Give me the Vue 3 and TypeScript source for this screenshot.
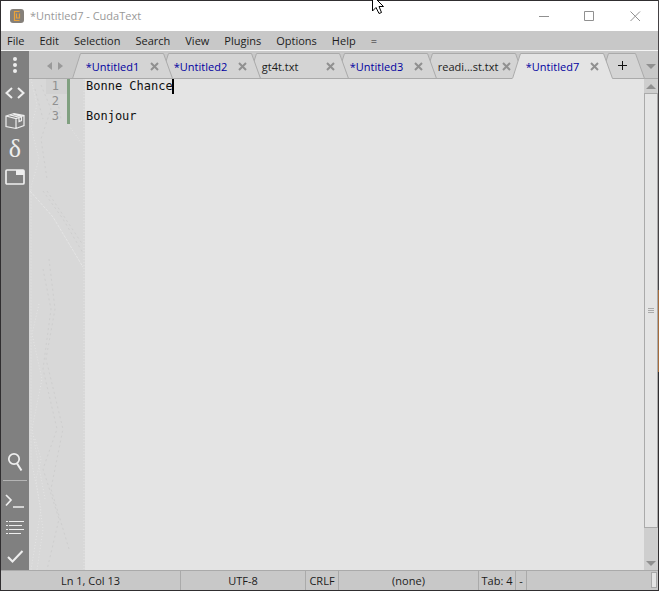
<script setup lang="ts">
import { ref, computed } from 'vue'

interface Tab { id: number; title: string; modified: boolean }

const menus = ['File', 'Edit', 'Selection', 'Search', 'View', 'Plugins', 'Options', 'Help', '=']
const tabs: Tab[] = [
  { id: 1, title: '*Untitled1', modified: true },
  { id: 2, title: '*Untitled2', modified: true },
  { id: 3, title: 'gt4t.txt', modified: false },
  { id: 4, title: '*Untitled3', modified: true },
  { id: 5, title: 'readi...st.txt', modified: false },
  { id: 6, title: '*Untitled7', modified: true },
]
const active = ref(6)
const code = ref('Bonne Chance\n\nBonjour')
const lineCount = computed(() => code.value.split('\n').length)
</script>

<template>
  <div class="window">
    <header class="titlebar">
      <svg class="logo" width="14" height="14" viewBox="0 0 14 14">
        <rect width="14" height="14" rx="3" fill="#85807a" />
        <path d="M9.5 2.5H4.5V11.5H9.5M6.5 4.5V9H9.5V4.5" fill="none" stroke="#e9a23b" stroke-width="1.2" />
      </svg>
      <h1>*Untitled7 - CudaText</h1>
      <div class="winbuttons">
        <button aria-label="Minimize"><svg width="11" height="11"><path d="M1 5.5H11" stroke="#909090" /></svg></button>
        <button aria-label="Maximize"><svg width="11" height="11"><path d="M.5.5H9.5V9.5H.5Z" fill="none" stroke="#909090" /></svg></button>
        <button aria-label="Close"><svg width="11" height="11"><path d="M.5.5L10 10M10 .5L.5 10" stroke="#909090" /></svg></button>
      </div>
      <svg class="pointer" width="12" height="19" viewBox="0 0 12 19">
        <path d="M.5 .5V16L4 12.5L7 18.5L9.5 17.5L7 11.5H11.5Z" fill="#fff" stroke="#000" />
      </svg>
    </header>

    <nav class="menubar">
      <button v-for="m in menus" :key="m">{{ m }}</button>
    </nav>

    <div class="workspace">
      <aside class="sidebar">
        <button aria-label="Menu"><svg width="20" height="20"><g class="dots"><circle cx="10" cy="4" r="2" /><circle cx="10" cy="10" r="2" /><circle cx="10" cy="16" r="2" /></g></svg></button>
        <button aria-label="Code tree"><svg width="20" height="20"><path d="M7 5L1.5 10L7 15M13 5L18.5 10L13 15" /></svg></button>
        <button aria-label="Project"><svg width="20" height="20"><path class="thin" d="M1 5L9 2.5L19 4.5V14.5L11 17.5L1 15.5ZM1 5L11 7.5L19 4.5M11 7.5V17.5M5 3.8L14 6.2V10.5L16.5 9.5V5.3L8 3" /></svg></button>
        <button class="delta" aria-label="Snippets">δ</button>
        <button aria-label="Tabs"><svg width="20" height="20"><path d="M2 3H18Q19 3 19 4V16Q19 17 18 17H2Q1 17 1 16V4Q1 3 2 3Z" class="medium" /><path d="M11 3H19V8H11Z" class="solid" /></svg></button>
        <span class="spacer"></span>
        <button aria-label="Find"><svg width="20" height="20"><circle cx="9" cy="8" r="5.2" class="medium" /><path d="M12 12.500L16.5 19.5" /></svg></button>
        <hr>
        <button aria-label="Console"><svg width="20" height="20"><path d="M1 5L6 10L1 15.5M8 17H19" class="medium" /></svg></button>
        <button aria-label="Output"><svg width="20" height="20"><path d="M1 3.5H3M4 3.5H19M1 7.5H3M4 7.5H17M1 11.5H3M4 11.5H19M1 15.5H3M4 15.5H16" class="thin" /></svg></button>
        <button aria-label="Validate"><svg width="20" height="20"><path d="M3 11L7.5 15.5L17.5 5" /></svg></button>
      </aside>

      <main>
        <div class="tabbar">
          <div class="arrows">
            <button aria-label="Previous tabs"><svg width="5" height="8"><path d="M5 0V8L0 4Z" /></svg></button>
            <button aria-label="Next tabs"><svg width="5" height="8"><path d="M0 0V8L5 4Z" /></svg></button>
          </div>
          <div
            v-for="t in tabs" :key="t.id" class="tab"
            :class="{ active: t.id === active, modified: t.modified }"
            :style="{ zIndex: t.id === active ? 20 : 10 - t.id }"
          >
            <svg class="shape" width="101" height="26" viewBox="0 0 101 26">
              <path d="M0 26V25.5L8.5 .5H91.5L100.5 25.5V26Z" class="face" />
              <path d="M.5 25.5L8.5 .5H91.5L100.5 25.5" class="edge" />
              <path v-if="t.id !== active" d="M0 25.5H101" class="edge" />
            </svg>
            <button class="name" @click="active = t.id">{{ t.title }}</button>
            <button class="close" :aria-label="'Close ' + t.title"><svg width="9" height="9"><path d="M1 1L8 8M8 1L1 8" /></svg></button>
          </div>
          <button class="add" aria-label="New tab">
            <svg width="45" height="26"><path d="M.5 25.5L8.5 .5H35.5L44.5 25.5Z" class="face edge" /><path d="M18 12.5H27M22.5 8V17" stroke="#111" /></svg>
          </button>
          <button class="list" aria-label="Tab list"><svg width="10" height="5"><path d="M0 0H10L5 5Z" /></svg></button>
        </div>

        <div class="editor">
          <div class="gutter">
            <svg class="grain" width="56" height="491" viewBox="0 0 56 491" fill="none">
              <g stroke="#e4e4e4" stroke-dasharray="1 2">
                <path d="M1 112L24 138L54 188" stroke-dasharray="3 1" />
                <path d="M2 0L8 26L2 48L10 80L2 108V380L12 430L2 491" />
                <path d="M10 225L3 255L13 300L3 350L16 420" />
                <path d="M6 360L12 380L7 400L14 450L8 491" />
                <path d="M55 0V491" />
                <path d="M38 44L54 66" />
              </g>
              <g stroke="#cecece" stroke-dasharray="2 3">
                <path d="M14 112L34 140L54 174M18 112L54 166" />
                <path d="M12 6L22 30L12 60L18 100M26 8L32 40M6 10L14 40" />
                <path d="M14 190L22 230L14 290L28 350L14 390L30 440L18 491" />
                <path d="M20 180L26 230L17 280L34 350L22 410L40 470" />
              </g>
            </svg>
            <ol><li v-for="n in lineCount" :key="n" :class="{ current: n === 1 }">{{ n }}</li></ol>
          </div>
          <div class="code">
            <textarea v-model="code" aria-label="Document text" spellcheck="false"></textarea>
            <span class="caret"></span>
          </div>
          <div class="scrollbar">
            <button aria-label="Scroll up"><svg width="10" height="5"><path d="M5 0L10 5H0Z" /></svg></button>
            <div class="thumb"><i></i><i></i><i></i></div>
            <div class="track"></div>
            <button aria-label="Scroll down"><svg width="10" height="5"><path d="M0 0H10L5 5Z" /></svg></button>
          </div>
        </div>
      </main>
    </div>

    <footer class="statusbar">
      <span class="pos">Ln 1, Col 13</span>
      <span class="enc">UTF-8</span>
      <span class="eol">CRLF</span>
      <span class="lexer">(none)</span>
      <span class="tabsize">Tab: 4</span>
      <span class="sel">-</span>
      <span class="rest"><i></i></span>
    </footer>
  </div>
</template>

<style>
body { margin: 0; }
</style>

<style scoped>
.window {
  box-sizing: border-box;
  height: 100vh;
  display: flex;
  flex-direction: column;
  padding: 1px;
  background: linear-gradient(#454245 49%, #a46b3c 49% 63%, #302e30 63%) right / 1px 100% no-repeat, #302e30;
  font: 11px/16px "Open Sans", "Noto Sans", sans-serif;
  color: #1c1c1c;
}
button {
  border: 0;
  padding: 0;
  margin: 0;
  background: none;
  font: inherit;
  color: inherit;
  display: flex;
  align-items: center;
  justify-content: center;
}
svg { display: block; }
.titlebar {
  position: relative;
  display: flex;
  align-items: center;
  height: 30px;
  flex: none;
  background: #fff;
  padding-left: 9px;
  gap: 6px;
}
h1 { margin: 0; flex: 1; font-size: 11px; font-weight: 400; color: #999; }
.winbuttons { display: flex; }
.winbuttons button { width: 46px; height: 28px; }
.pointer { position: absolute; left: 371px; top: -6px; }
.menubar {
  display: flex;
  gap: 15px;
  height: 19px;
  flex: none;
  padding-left: 6px;
  background: #c8c8c8;
  border-bottom: 1px solid #f4f4f4;
}
.workspace { flex: 1; display: flex; min-height: 0; }
.sidebar {
  width: 28px;
  background: #808080;
  display: flex;
  flex-direction: column;
  align-items: center;
}
.sidebar button { width: 28px; height: 28px; }
.sidebar svg { fill: none; stroke: #eee; stroke-width: 2; }
.sidebar .thin { stroke-width: 1.2; }
.sidebar .medium { stroke-width: 1.7; }
.sidebar .dots, .sidebar .solid { fill: #eee; stroke: none; }
.sidebar .delta { color: #eee; font: 26px/28px "Liberation Serif", serif; }
.spacer { flex: 1; }
hr { width: 24px; margin: 5px 0; border: 0; border-top: 1px solid #b4b4b4; }
main { flex: 1; min-width: 0; display: flex; flex-direction: column; }
.tabbar {
  display: flex;
  align-items: flex-end;
  height: 28px;
  flex: none;
  isolation: isolate;
  background: linear-gradient(#c8c8c8 27px, #aaa 27px);
}
.arrows { display: flex; gap: 6px; width: 28px; padding: 0 0 9px 18px; fill: #999; }
.tab {
  position: relative;
  box-sizing: border-box;
  width: 101px;
  height: 26px;
  flex: none;
  margin-right: -13px;
  padding: 1px 14px 0 14px;
  display: flex;
  align-items: center;
  justify-content: space-between;
}
.shape { position: absolute; left: 0; top: 0; z-index: -1; }
.face { fill: #d4d4d4; }
.active .face { fill: #e4e4e4; }
.edge { stroke: #aaa; }
path.edge:not(.face) { fill: none; }
.tab .name { white-space: nowrap; }
.modified .name { color: #0000a0; }
.close svg { stroke: #909090; stroke-width: 2; }
.list { width: 15px; height: 26px; margin-left: auto; fill: #909090; }
.editor { flex: 1; display: flex; min-height: 0; font: 12px/15px "DejaVu Sans Mono", monospace; }
.gutter { position: relative; width: 56px; background: #d8d8d8; overflow: hidden; }
.grain { position: absolute; left: 0; top: 0; }
ol {
  position: relative;
  list-style: none;
  margin: 0 0 0 17px;
  padding: 0;
  width: 21px;
  border-right: 3px solid #80a080;
  color: #909090;
}
li { text-align: right; padding-right: 8px; }
li.current { background: #d2d2d2; }
.code { position: relative; flex: 1; display: flex; }
textarea {
  flex: 1;
  min-width: 0;
  border: 0;
  outline: 0;
  resize: none;
  padding: 0 1px;
  background: #e4e4e4;
  color: #101010;
  font: inherit;
}
.caret { position: absolute; left: 12ch; top: 0; width: 2px; height: 15px; background: #000; }
.scrollbar { width: 14px; display: flex; flex-direction: column; background: #cecece; fill: #909090; }
.scrollbar button { height: 14px; }
.thumb {
  flex: 434;
  border: 1px solid #aaa;
  background: #e4e4e4;
  display: flex;
  flex-direction: column;
  align-items: center;
  justify-content: center;
  gap: 1px;
}
.thumb i { width: 6px; height: 1px; background: #aaa; }
.track { flex: 28; }
.statusbar {
  display: flex;
  height: 19px;
  flex: none;
  border-top: 1px solid #aaa;
  background: #c8c8c8;
  line-height: 19px;
  text-align: center;
}
.statusbar span { box-sizing: border-box; border-right: 1px solid #aaa; white-space: nowrap; }
.pos { width: 180px; }
.enc { width: 125px; }
.eol { width: 33px; }
.lexer { width: 140px; }
.tabsize { width: 37px; }
.sel { width: 11px; }
.statusbar .rest { flex: 1; border: 0; display: flex; justify-content: flex-end; padding: 1px 1px 2px; }
.rest i { width: 4px; border: 1px solid #aaa; background: #e4e4e4; }
</style>
